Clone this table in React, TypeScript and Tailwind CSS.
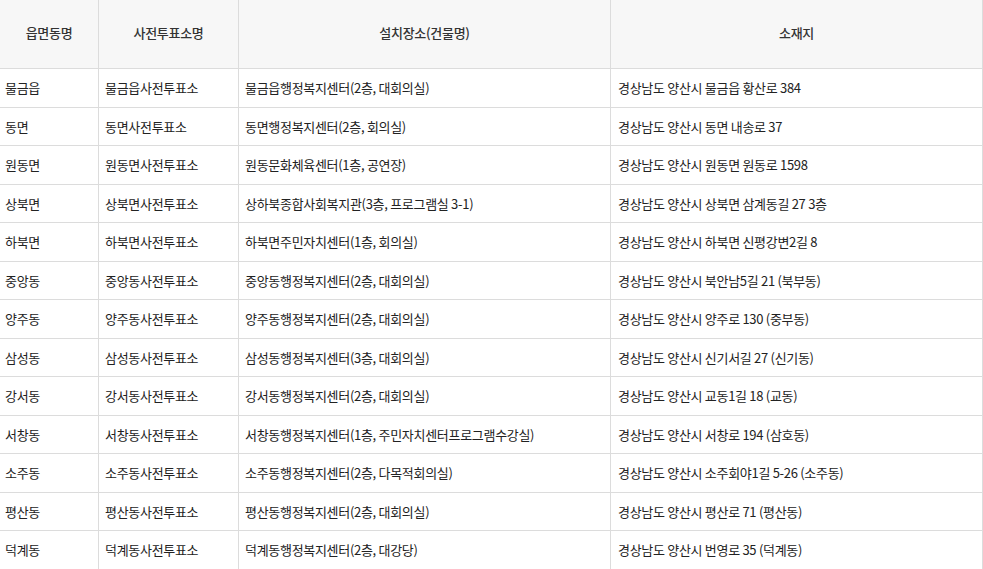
import React from "react";

const rows: [string, string, string, string][] = [
  ["물금읍", "물금읍사전투표소", "물금읍행정복지센터(2층, 대회의실)", "경상남도 양산시 물금읍 황산로 384"],
  ["동면", "동면사전투표소", "동면행정복지센터(2층, 회의실)", "경상남도 양산시 동면 내송로 37"],
  ["원동면", "원동면사전투표소", "원동문화체육센터(1층, 공연장)", "경상남도 양산시 원동면 원동로 1598"],
  ["상북면", "상북면사전투표소", "상하북종합사회복지관(3층, 프로그램실 3-1)", "경상남도 양산시 상북면 삼계동길 27 3층"],
  ["하북면", "하북면사전투표소", "하북면주민자치센터(1층, 회의실)", "경상남도 양산시 하북면 신평강변2길 8"],
  ["중앙동", "중앙동사전투표소", "중앙동행정복지센터(2층, 대회의실)", "경상남도 양산시 북안남5길 21 (북부동)"],
  ["양주동", "양주동사전투표소", "양주동행정복지센터(2층, 대회의실)", "경상남도 양산시 양주로 130 (중부동)"],
  ["삼성동", "삼성동사전투표소", "삼성동행정복지센터(3층, 대회의실)", "경상남도 양산시 신기서길 27 (신기동)"],
  ["강서동", "강서동사전투표소", "강서동행정복지센터(2층, 대회의실)", "경상남도 양산시 교동1길 18 (교동)"],
  ["서창동", "서창동사전투표소", "서창동행정복지센터(1층, 주민자치센터프로그램수강실)", "경상남도 양산시 서창로 194 (삼호동)"],
  ["소주동", "소주동사전투표소", "소주동행정복지센터(2층, 다목적회의실)", "경상남도 양산시 소주회야1길 5-26 (소주동)"],
  ["평산동", "평산동사전투표소", "평산동행정복지센터(2층, 대회의실)", "경상남도 양산시 평산로 71 (평산동)"],
  ["덕계동", "덕계동사전투표소", "덕계동행정복지센터(2층, 대강당)", "경상남도 양산시 번영로 35 (덕계동)"],
];

const grid = "grid grid-cols-[99px_140px_372px_372px]";

export default function App() {
  return (
    <div
      className="w-[983px] h-[569px] overflow-hidden bg-white text-[#222] text-[13px] tracking-[-0.3px]"
      style={{ fontFamily: '"Noto Sans CJK KR", "Noto Sans", sans-serif' }}
    >
      <div className={`${grid} h-[69px] bg-[#f7f7f7] border-b border-[#dcdcdc] font-medium text-[#333]`}>
        {["읍면동명", "사전투표소명", "설치장소(건물명)", "소재지"].map((h) => (
          <div key={h} className="flex items-center justify-center border-r border-[#dcdcdc] pb-[2px]">
            {h}
          </div>
        ))}
      </div>
      {rows.map((r, i) => (
        <div key={i} className={`${grid} h-[38.5px] border-b border-[#dcdcdc]`}>
          <div className="flex items-center border-r border-[#dcdcdc] pl-[5px] whitespace-nowrap">{r[0]}</div>
          <div className="flex items-center border-r border-[#dcdcdc] pl-[6px] whitespace-nowrap">{r[1]}</div>
          <div className="flex items-center border-r border-[#dcdcdc] pl-[6px] whitespace-nowrap">{r[2]}</div>
          <div className="flex items-center border-r border-[#dcdcdc] pl-[7px] whitespace-nowrap">{r[3]}</div>
        </div>
      ))}
    </div>
  );
}
